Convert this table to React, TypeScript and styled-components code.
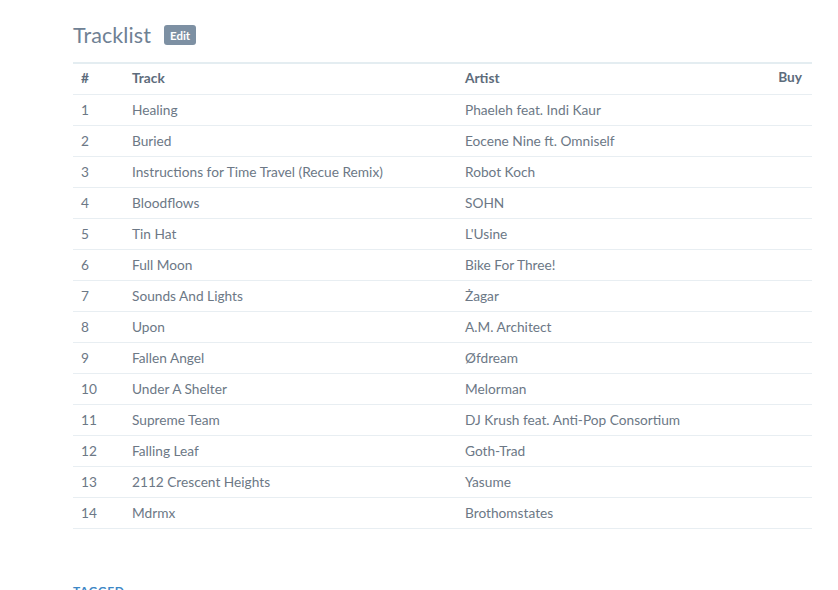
import React from "react";
import styled, { createGlobalStyle } from "styled-components";

const GlobalStyle = createGlobalStyle`
  body {
    margin: 0;
    background: #ffffff;
    font-family: Lato, "Noto Sans", sans-serif;
  }
`;

const Page = styled.div`
  padding: 20px 26px 0 73px;
  width: 739px;
`;

const TitleRow = styled.div`
  display: flex;
  align-items: center;
  gap: 13px;
  height: 30px;
  margin-bottom: 12px;
`;

const Title = styled.h2`
  margin: 0;
  font-size: 21.5px;
  font-weight: 400;
  color: #6f8194;
  letter-spacing: 0.1px;
`;

const EditBadge = styled.span`
  display: inline-flex;
  align-items: center;
  justify-content: center;
  height: 20px;
  padding: 0 6px;
  border-radius: 3px;
  background: #7d90a3;
  color: #ffffff;
  font-size: 11.5px;
  font-weight: 700;
`;

const Table = styled.table`
  width: 100%;
  border-collapse: collapse;
  table-layout: fixed;
  border-top: 2px solid #e4edf1;
  font-size: 13.7px;
`;

const Col = styled.col<{ $width?: number }>`
  width: ${({ $width }) => ($width ? `${$width}px` : "auto")};
`;

const HeadCell = styled.th<{ $right?: boolean }>`
  text-align: ${({ $right }) => ($right ? "right" : "left")};
  height: 28px;
  padding: 0 10px 2px 8px;
  color: #5d6c7c;
  font-weight: 700;
  vertical-align: ${({ $right }) => ($right ? "top" : "middle")};
  line-height: ${({ $right }) => ($right ? "26px" : "28px")};
  border-bottom: 1px solid #e8eef2;
`;

const Row = styled.tr`
  border-bottom: 1px solid #e8eef2;
`;

const Cell = styled.td`
  height: 28px;
  padding: 0 8px 2px;
  color: #6c7886;
  white-space: nowrap;
`;

const Tagged = styled.div`
  margin-top: 54px;
  color: #3d87c6;
  font-size: 12px;
  font-weight: 700;
  letter-spacing: 0.6px;
  text-transform: uppercase;
`;

const tracks: [string, string][] = [
  ["Healing", "Phaeleh feat. Indi Kaur"],
  ["Buried", "Eocene Nine ft. Omniself"],
  ["Instructions for Time Travel (Recue Remix)", "Robot Koch"],
  ["Bloodflows", "SOHN"],
  ["Tin Hat", "L'Usine"],
  ["Full Moon", "Bike For Three!"],
  ["Sounds And Lights", "Żagar"],
  ["Upon", "A.M. Architect"],
  ["Fallen Angel", "Øfdream"],
  ["Under A Shelter", "Melorman"],
  ["Supreme Team", "DJ Krush feat. Anti-Pop Consortium"],
  ["Falling Leaf", "Goth-Trad"],
  ["2112 Crescent Heights", "Yasume"],
  ["Mdrmx", "Brothomstates"],
];

export default function App() {
  return (
    <>
      <GlobalStyle />
      <Page>
        <TitleRow>
          <Title>Tracklist</Title>
          <EditBadge>Edit</EditBadge>
        </TitleRow>
        <Table>
          <colgroup>
            <Col $width={51} />
            <Col $width={333} />
            <Col />
            <Col $width={80} />
          </colgroup>
          <thead>
            <tr>
              <HeadCell>#</HeadCell>
              <HeadCell>Track</HeadCell>
              <HeadCell>Artist</HeadCell>
              <HeadCell $right>Buy</HeadCell>
            </tr>
          </thead>
          <tbody>
            {tracks.map(([track, artist], i) => (
              <Row key={i}>
                <Cell>{i + 1}</Cell>
                <Cell>{track}</Cell>
                <Cell>{artist}</Cell>
                <Cell />
              </Row>
            ))}
          </tbody>
        </Table>
        <Tagged>Tagged</Tagged>
      </Page>
    </>
  );
}
